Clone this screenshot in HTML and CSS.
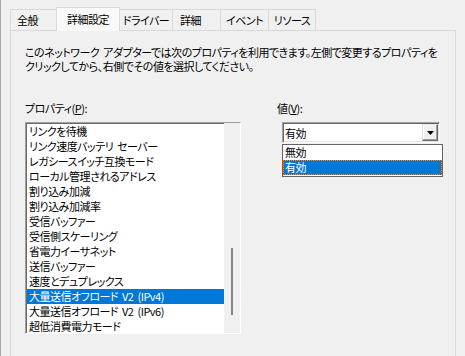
FILE: index.html
```html
<!DOCTYPE html>
<html lang="ja">
<head>
    <meta charset="UTF-8">
    <title>プロパティ - 詳細設定</title>
    <link rel="stylesheet" href="styles.css">
</head>
<body>
    <div class="window">
        <div class="tabs">
            <div class="tab tab-general">全般</div>
            <div class="tab tab-advanced active">詳細設定</div>
            <div class="tab tab-driver">ドライバー</div>
            <div class="tab tab-details">詳細</div>
            <div class="tab tab-events">イベント</div>
            <div class="tab tab-resources">リソース</div>
        </div>

        <div class="page">
            <p class="desc">このネットワーク アダプターでは次のプロパティを利用できます。左側で変更するプロパティを<br>クリックしてから、右側でその値を選択してください。</p>

            <div class="fields">
                <div class="prop-col">
                    <div class="label">プロパティ(<u>P</u>):</div>
                    <div class="listbox">
                        <ul class="items">
                            <li>リンクを待機</li>
                            <li>リンク速度バッテリ セーバー</li>
                            <li>レガシースイッチ互換モード</li>
                            <li>ローカル管理されるアドレス</li>
                            <li>割り込み加減</li>
                            <li>割り込み加減率</li>
                            <li>受信バッファー</li>
                            <li>受信側スケーリング</li>
                            <li>省電力イーサネット</li>
                            <li>送信バッファー</li>
                            <li>速度とデュプレックス</li>
                            <li class="selected">大量送信オフロード V2 (IPv4)</li>
                            <li>大量送信オフロード V2 (IPv6)</li>
                            <li>超低消費電力モード</li>
                        </ul>
                        <div class="scrollbar"><div class="thumb"></div></div>
                    </div>
                </div>

                <div class="value-col">
                    <div class="label">値(<u>V</u>):</div>
                    <div class="combo">
                        <span class="combo-text">有効</span>
                        <span class="combo-btn">
                            <svg width="7" height="4" viewBox="0 0 7 4"><polygon points="0,0 7,0 3.5,4" fill="#000"/></svg>
                        </span>
                    </div>
                    <ul class="dropdown">
                        <li>無効</li>
                        <li class="selected">有効</li>
                    </ul>
                </div>
            </div>
        </div>
    </div>
</body>
</html>
```

FILE: styles.css
```css
body {
    margin: 0;
    background-color: #f0f0f0;
    font-family: "Noto Sans CJK JP", "Noto Sans", sans-serif;
    font-size: 11px;
    letter-spacing: -0.5px;
    word-spacing: 2px;
    font-feature-settings: "palt";
    color: #000;
}
.window {
    width: 465px;
    height: 356px;
    box-sizing: border-box;
    border-left: 1px solid #a8a8a8;
    padding-top: 7px;
    overflow: hidden;
}

/* tab strip */
.tabs {
    display: flex;
    align-items: flex-end;
    height: 23px;
    margin-left: 9px;
    position: relative;
    z-index: 2;
}
.tab {
    height: 21px;
    box-sizing: border-box;
    border: 1px solid #d9d9d9;
    border-bottom: none;
    margin-right: -1px;
    line-height: 20px;
    text-align: center;
    white-space: nowrap;
    background-color: #f0f0f0;
}
.tab.active {
    height: 24px;
    margin-bottom: -1px;
    line-height: 22px;
    background-color: #f9f9f9;
    position: relative;
    z-index: 1;
}
.tab-general { width: 47px; text-align: left; padding-left: 6px; }
.tab-advanced { width: 64px; }
.tab-driver { width: 54px; }
.tab-details { width: 49px; text-align: left; padding-left: 7px; }
.tab-events { width: 49px; }
.tab-resources { width: 48px; }

/* page */
.page {
    width: 446px;
    height: 340px;
    box-sizing: border-box;
    margin-left: 9px;
    border: 1px solid #d9d9d9;
    padding: 14px 0 0 14px;
}
.desc {
    margin: 0;
    line-height: 14px;
    white-space: nowrap;
}
.fields {
    display: flex;
    margin-top: 28px;
}
.label {
    line-height: 14px;
    margin-bottom: 7px;
    white-space: nowrap;
}

/* property list */
.prop-col {
    width: 216px;
}
.listbox {
    display: flex;
    height: 212px;
    box-sizing: border-box;
    border: 1px solid;
    border-color: #a0a0a0 #ffffff #ffffff #a0a0a0;
    box-shadow: inset 1px 1px 0 #696969;
    background-color: #fff;
}
.items {
    flex: 1;
    list-style: none;
    margin: 0;
    padding: 1px 0 0 1px;
}
.items li {
    height: 15px;
    line-height: 15px;
    padding-left: 2px;
    white-space: nowrap;
}
.items li.selected {
    background-color: #0078d7;
    color: #fff;
}
.scrollbar {
    width: 16px;
    background-color: #f0f0f0;
}
.thumb {
    width: 2px;
    height: 67px;
    margin: 125px 0 0 7px;
    background-color: #858585;
}

/* value combo */
.value-col {
    margin-left: 36px;
}
.combo {
    display: flex;
    align-items: center;
    width: 158px;
    height: 21px;
    box-sizing: border-box;
    margin-left: 5px;
    border: 1px solid;
    border-color: #a0a0a0 #ffffff #ffffff #a0a0a0;
    box-shadow: inset 1px 1px 0 #696969, inset -1px -1px 0 #e3e3e3;
    background-color: #fff;
    padding: 1px 1px 1px 2px;
}
.combo-text {
    flex: 1;
}
.combo-btn {
    display: flex;
    align-items: center;
    justify-content: center;
    width: 16px;
    height: 17px;
    box-sizing: border-box;
    background-color: #f0f0f0;
    border: 1px solid;
    border-color: #e3e3e3 #696969 #696969 #e3e3e3;
    box-shadow: inset -1px -1px 0 #a0a0a0, inset 1px 1px 0 #fff;
}
.dropdown {
    list-style: none;
    width: 161px;
    box-sizing: border-box;
    margin: 1px 0 0 5px;
    padding: 0 0 1px;
    border: 1px solid #646464;
    background-color: #fff;
}
.dropdown li {
    height: 15px;
    line-height: 15px;
    padding-left: 2px;
}
.dropdown li.selected {
    background-color: #0078d7;
    color: #fff;
    outline: 1px dotted #ff8728;
    outline-offset: -1px;
}
```
